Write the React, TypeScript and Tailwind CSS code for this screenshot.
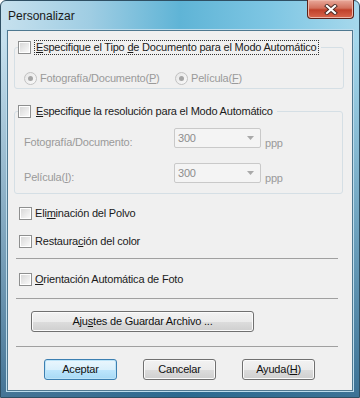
import type { ReactNode } from "react";

const font = "font-['Liberation_Sans',Arial,sans-serif]";

function Check() {
  return (
    <span className="flex h-[13px] w-[13px] shrink-0 border border-[#8e8f8f] bg-white p-[1px]">
      <span className="h-full w-full bg-gradient-to-br from-[#d9d9d9] to-[#f9f9f9]" />
    </span>
  );
}

function Radio() {
  return (
    <span className="flex h-[13px] w-[13px] shrink-0 items-center justify-center rounded-full border border-[#c2c2c2] bg-gradient-to-br from-[#e6e6e6] to-[#fafafa]">
      <span className="h-[5px] w-[5px] rounded-full bg-[#a5a5a5]" />
    </span>
  );
}

function U({ children }: { children: ReactNode }) {
  return <span className="underline underline-offset-[1px]">{children}</span>;
}

function CheckRow({ children }: { children: ReactNode }) {
  return (
    <div className="flex h-[13px] items-center gap-[3px] pl-[11px]">
      <Check />
      <span>{children}</span>
    </div>
  );
}

function Combo() {
  return (
    <div className="flex h-[20px] w-[87px] items-center justify-between rounded-[2px] border border-[#c9c9c9] bg-[#f4f4f4] pl-[3px] pr-[6px] text-[#8d8d8d]">
      <span>300</span>
      <svg width="7" height="4" viewBox="0 0 7 4">
        <path d="M0 0h7L3.5 4z" fill="#a9a9a9" />
      </svg>
    </div>
  );
}

function Btn({ children, w, primary }: { children: ReactNode; w: string; primary?: boolean }) {
  return (
    <div
      className={`flex h-[21px] ${w} items-center justify-center rounded-[3px] border ${
        primary
          ? "border-[#3c7fb1] bg-[linear-gradient(#eaf6fd_0%,#d9f0fc_50%,#bee6fd_51%,#a7d9f5_100%)] shadow-[inset_0_0_0_1px_#bde4f8]"
          : "border-[#707070] bg-[linear-gradient(#f2f2f2_0%,#ebebeb_50%,#dddddd_51%,#cfcfcf_100%)] shadow-[inset_0_0_0_1px_#fbfbfb]"
      } text-[#111]`}
    >
      {children}
    </div>
  );
}

export default function App() {
  return (
    <div className={`${font} relative h-[398px] w-[360px] overflow-hidden bg-white`}>
      <div className="flex h-full w-full flex-col rounded-t-[6px] border border-[#2f4f63] bg-[linear-gradient(180deg,rgba(0,0,0,0)_0px,rgba(0,0,0,0)_40px,rgba(25,80,120,0.75)_100%),linear-gradient(90deg,#c7e1ee_0%,#9fcde3_25%,#5fb4d6_50%,#7ec6e3_75%,#a6d8ec_100%)]">
        <div className="flex h-[29px] shrink-0 items-center pl-[7px] text-[12px] text-[#1a1a1a]">
          Personalizar
        </div>

        <div className="mx-[6px] mb-[6px] flex flex-1 flex-col border border-[#4f7890] bg-[#f0f0f0] text-[11px] leading-[13px] tracking-[-0.2px] text-[#1b1b1b] shadow-[0_0_0_1px_#bcdcec]">
          <fieldset className="ml-[6px] mr-[8px] mt-[9px] rounded-[3px] border border-[#d5dfe5] px-[3px] pb-[3px]">
            <legend className="flex items-center gap-[3px] pr-[2px]">
              <Check />
              <span className="border border-dotted border-[#333] px-[1px]">
                <U>E</U>specifique el Tipo <U>d</U>e Documento para el Modo Automático
              </span>
            </legend>
            <div className="mt-[16px] flex h-[14px] items-center text-[#9a9a9a]">
              <div className="flex w-[157px] items-center gap-[3px] pl-[6px]">
                <Radio />
                <span>
                  Fotografía/Documento(<U>P</U>)
                </span>
              </div>
              <div className="flex items-center gap-[3px]">
                <Radio />
                <span>
                  Película(<U>F</U>)
                </span>
              </div>
            </div>
          </fieldset>

          <fieldset className="ml-[6px] mr-[9px] mt-[16px] rounded-[3px] border border-[#d5dfe5] px-[3px] pb-[10px]">
            <legend className="flex items-center gap-[3px] pr-[2px]">
              <Check />
              <span className="px-[2px]">
                <U>E</U>specifique la resolución para el Modo Automático
              </span>
            </legend>
            <div className="mt-[10px] flex flex-col gap-[15px] text-[#9a9a9a]">
              <div className="flex items-center">
                <span className="relative top-[4px] w-[156px] pl-[6px]">
                  Foto<U>g</U>rafía/Documento:
                </span>
                <Combo />
                <span className="relative top-[5px] pl-[4px]">ppp</span>
              </div>
              <div className="flex items-center">
                <span className="relative top-[4px] w-[156px] pl-[6px]">
                  Película(<U>I</U>):
                </span>
                <Combo />
                <span className="relative top-[5px] pl-[4px]">ppp</span>
              </div>
            </div>
          </fieldset>

          <div className="mt-[13px] flex flex-col gap-[15px]">
            <CheckRow>
              Eli<U>m</U>inación del Polvo
            </CheckRow>
            <CheckRow>
              Restaura<U>c</U>ión del color
            </CheckRow>
          </div>

          <div className="ml-[8px] mr-[14px] mt-[10px] h-px bg-[#a0a0a0]" />

          <div className="mt-[14px]">
            <CheckRow>
              <U>O</U>rientación Automática de Foto
            </CheckRow>
          </div>

          <div className="ml-[8px] mr-[14px] mt-[12px] h-px bg-[#a0a0a0]" />

          <div className="ml-[23px] mt-[12px]">
            <Btn w="w-[223px]">
              Aju<U>s</U>tes de Guardar Archivo ...
            </Btn>
          </div>

          <div className="ml-[8px] mr-[14px] mt-[14px] h-px bg-[#a0a0a0]" />

          <div className="ml-[36px] mt-[12px] flex gap-[26px]">
            <Btn w="w-[73px]" primary>
              Aceptar
            </Btn>
            <Btn w="w-[73px]">Cancelar</Btn>
            <Btn w="w-[73px]">
              Ayuda(<U>H</U>)
            </Btn>
          </div>
        </div>
      </div>

      <div className="absolute right-[6px] top-0 flex h-[19px] w-[47px] items-center justify-center rounded-b-[4px] border border-t-0 border-[#5b2219] bg-[linear-gradient(#e9a99b_0%,#d2715d_45%,#c0412a_55%,#d8664c_100%)] shadow-[inset_0_0_0_1px_#eeb6a8]">
        <svg width="14" height="11" viewBox="0 0 14 11">
          <path d="M3 2l8 7M11 2l-8 7" stroke="#4a2a24" strokeWidth="4" strokeLinecap="square" />
          <path d="M3 2l8 7M11 2l-8 7" stroke="#ffffff" strokeWidth="2.2" strokeLinecap="square" />
        </svg>
      </div>
    </div>
  );
}
